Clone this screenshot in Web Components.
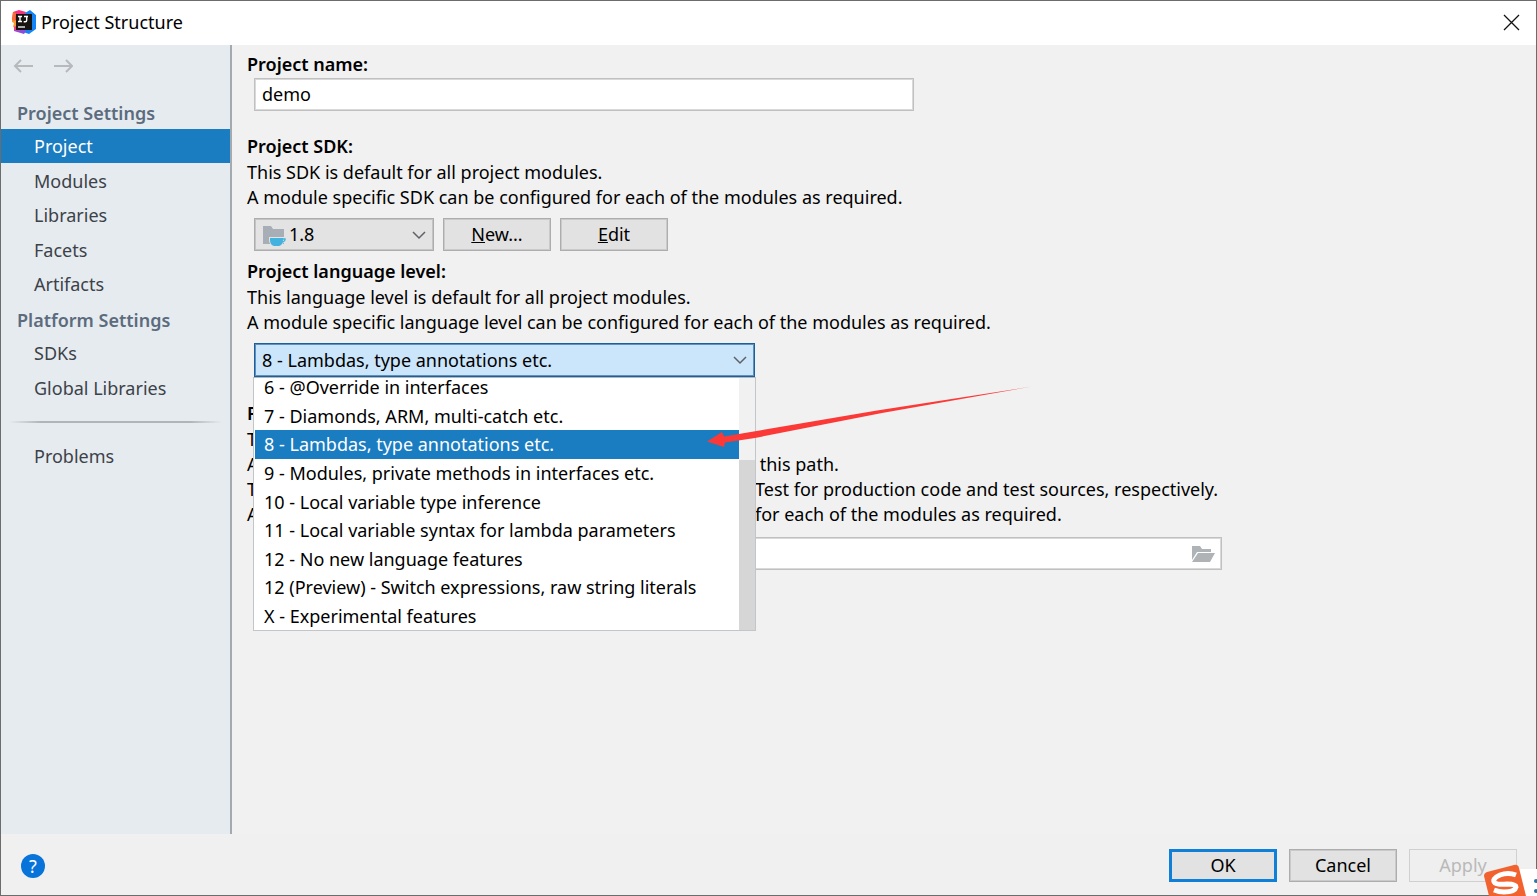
<!DOCTYPE html>
<html lang="en">
<head>
<meta charset="utf-8">
<title>Project Structure</title>
<style>
  html, body { height: 100%; margin: 0; }
  body { font: 18px/25px "Noto Sans", "Open Sans", sans-serif; color: #000; background: #f1f1f1; overflow: hidden; }
</style>
</head>
<body>
<settings-window>
  <side-nav slot="nav">
    <nav-group heading="Project Settings" size="large">
      <nav-item current>Project</nav-item>
      <nav-item>Modules</nav-item>
      <nav-item>Libraries</nav-item>
      <nav-item>Facets</nav-item>
      <nav-item>Artifacts</nav-item>
    </nav-group>
    <nav-group heading="Platform Settings" size="small">
      <nav-item>SDKs</nav-item>
      <nav-item>Global Libraries</nav-item>
    </nav-group>
    <nav-rule></nav-rule>
    <nav-group>
      <nav-item>Problems</nav-item>
    </nav-group>
  </side-nav>

  <project-form></project-form>

  <help-button slot="help"></help-button>
  <push-button slot="actions" primary>OK</push-button>
  <push-button slot="actions">Cancel</push-button>
  <push-button slot="actions" disabled>Apply</push-button>
  <ime-badge slot="overlay"></ime-badge>
</settings-window>

<script>
function define(name, html, setup) {
  const template = document.createElement('template');
  template.innerHTML = html;
  customElements.define(name, class extends HTMLElement {
    constructor() {
      super();
      this.attachShadow({ mode: 'open' }).append(template.content.cloneNode(true));
    }
    connectedCallback() { if (setup) setup(this, this.shadowRoot); }
  });
}

define('app-logo', `
  <style>:host { display: block; width: 24px; height: 24px; } svg { display: block; }</style>
  <svg width="24" height="24" viewBox="0 0 24 24" aria-hidden="true">
    <path d="M1 2 7 0l7 2-3 10-8 8-1-4 1-4-3-2z" fill="#f5317f"/>
    <path d="M0 9l6 2-2 7-3-1 1-4-2-1z" fill="#f89a2c"/>
    <path d="M1 2l3 1-1 8-3-1z" fill="#f2732c"/>
    <path d="M13 3l5-3 6 5v14l-7 5-9-3 8-6z" fill="#1683f4"/>
    <path d="M2 17l4-1 8 5-2 3-10-3z" fill="#8a4be0"/>
    <path d="M2 17l4-1 2 5-6-1z" fill="#f0417c"/>
    <rect x="4" y="4" width="16" height="16" fill="#161313"/>
    <path d="M6 6.500h4M8 6.500v5M6 11.500h4M12 6.500h4M14.700 6.500v3.800q0 1.500-1.500 1.500h-1.500" stroke="#fff" stroke-width="1.400" fill="none"/>
    <path d="M6 17h7" stroke="#fff" stroke-width="1.300"/>
  </svg>`);

define('settings-window', `
  <style>
    :host { display: flex; flex-direction: column; min-height: 100vh; box-sizing: border-box;
      border: 1px solid #6c6c6c; position: relative; background: #f1f1f1; }
    header { display: flex; align-items: center; gap: 5px; height: 44px; padding: 0 16px 2px 11px; background: #fff; box-sizing: border-box; }
    h1 { font: inherit; margin: 0; flex: 1; }
    .close { border: 0; background: none; padding: 0; width: 17px; height: 17px; display: block; }
    .close svg { display: block; }
    .body { flex: 1; display: flex; min-height: 0; }
    main { flex: 1; min-width: 0; }
    footer { display: flex; align-items: center; height: 61px; padding: 2px 19px 0 20px; gap: 12px; box-sizing: border-box; background: #f0f0f0; }
    .spacer { flex: 1; }
  </style>
  <header>
    <app-logo></app-logo>
    <h1>Project Structure</h1>
    <button class="close" aria-label="Close"><svg width="17" height="17"><path d="M1 1l15 15M16 1L1 16" stroke="#111" stroke-width="1.300"/></svg></button>
  </header>
  <div class="body">
    <slot name="nav"></slot>
    <main><slot></slot></main>
  </div>
  <footer>
    <slot name="help"></slot>
    <span class="spacer"></span>
    <slot name="actions"></slot>
  </footer>
  <slot name="overlay"></slot>`);

define('side-nav', `
  <style>
    :host { display: block; width: 229px; flex: none; background: #e6ebf0; border-right: 2px solid #a3aab0; }
    .history { display: flex; gap: 20px; height: 42px; padding-left: 12px; align-items: center; margin-bottom: 10px; }
    button { border: 0; background: none; padding: 0; width: 20px; height: 16px; }
    svg { display: block; }
    path { fill: none; stroke: #b7babd; stroke-width: 2; }
  </style>
  <div class="history">
    <button aria-label="Back" disabled><svg width="20" height="16"><path d="M20 8H2M8 2L2 8l6 6"/></svg></button>
    <button aria-label="Forward" disabled><svg width="20" height="16"><path d="M1 8h18M13 2l6 6-6 6"/></svg></button>
  </div>
  <nav aria-label="Settings"><slot></slot></nav>`);

define('nav-group', `
  <style>
    :host { display: block; }
    h2 { font-size: 18px; font-weight: 600; line-height: 32px; margin: 0; padding-left: 16px; color: #5c6b7e; white-space: nowrap; }
    h2:empty { display: none; }
    .list { display: flex; flex-direction: column; justify-content: space-between; }
    :host([size=large]) .list { height: 172px; margin-bottom: 3px; }
    :host([size=small]) .list { height: 69px; }
  </style>
  <h2></h2><div class="list" role="list"><slot></slot></div>`,
  (el, root) => { root.querySelector('h2').textContent = el.getAttribute('heading') || ''; });

define('nav-item', `
  <style>
    :host { display: block; }
    a { display: block; line-height: 34px; padding-left: 33px; color: #3c4248; text-decoration: none; }
    :host([current]) a { background: #1a7cc1; color: #fff; }
  </style>
  <a href="#"><slot></slot></a>`,
  (el, root) => {
    el.setAttribute('role', 'listitem');
    if (el.hasAttribute('current')) root.querySelector('a').setAttribute('aria-current', 'page');
  });

define('nav-rule', `
  <style>
    :host { display: block; height: 2px; margin: 16px 8px;
      background: linear-gradient(90deg, transparent, #b0b5b9 15%, #b0b5b9 85%, transparent); }
  </style>`);

define('push-button', `
  <style>
    :host { display: block; width: 108px; }
    button { font: inherit; width: 100%; height: 33px; padding: 0; box-sizing: border-box; display: block;
      background: #e2e2e2; border: 1px solid #adadad; color: #000; box-shadow: inset 0 0 0 1px #cacaca; line-height: 29px; }
    :host([primary]) button { border: 3px solid #0f7fd8; box-shadow: none; line-height: 25px; }
    button:disabled { background: #efefef; border-color: #d0d0d0; color: #b9b9b9; box-shadow: none; }
  </style>
  <button type="button"><slot></slot></button>`,
  (el, root) => { root.querySelector('button').disabled = el.hasAttribute('disabled'); });

define('help-button', `
  <style>
    button { font: inherit; width: 24px; height: 24px; padding: 0; border: 0; border-radius: 50%; display: block;
      background: #0873d8; color: #fff; line-height: 24px; }
  </style>
  <button type="button" aria-label="Help">?</button>`);

define('text-field', `
  <style>
    :host { display: block; }
    label { display: block; font-weight: 600; line-height: 26px; margin-bottom: 1px; }
    .box { display: flex; align-items: center; margin: var(--box-gap, 0) 0 0 7px; height: 33px; box-sizing: border-box;
      border: 1px solid #c0c0c0; outline: 1px solid #d9d9d9; outline-offset: -2px; background: #fff; padding: 0 6px 0 7px; }
    input { flex: 1; min-width: 0; border: 0; padding: 0; background: none; font: inherit; color: inherit; outline: 0; height: 25px; }
    ::slotted(p) { margin: 0; white-space: nowrap; }
  </style>
  <label for="field"></label>
  <slot></slot>
  <div class="box"><input id="field" type="text"><slot name="trailing"></slot></div>`,
  (el, root) => {
    root.querySelector('label').textContent = el.getAttribute('label');
    root.querySelector('input').value = el.getAttribute('value') || '';
  });

define('combo-field', `
  <style>
    :host { display: block; }
    label { display: block; font-weight: 600; line-height: 26px; margin-bottom: 1px; }
    ::slotted(p) { margin: 0; white-space: nowrap; }
    .row { display: flex; gap: 9px; margin: 8px 0 0 7px; }
    .combo { position: relative; width: var(--combo-width); }
    select { appearance: none; display: block; font: inherit; color: inherit; width: 100%; height: 33px; box-sizing: border-box;
      margin: 0; border: 1px solid #adadad; outline: 1px solid #c4c4c4; outline-offset: -2px; border-radius: 0; background: #e3e3e3; padding: 0 28px 0 var(--combo-inset, 7px); }
    :host([open]) select { background: #cbe5fa; border-color: #1d5f98; outline-color: #5d92bf; height: 34px; }
    .chevron { position: absolute; right: 8px; top: 13px; pointer-events: none; }
    .icon { position: absolute; left: 8px; top: 8px; pointer-events: none; }
    .popup { position: absolute; top: 100%; left: -1px; right: -1px; z-index: 2; }
  </style>
  <label for="field"></label>
  <slot></slot>
  <div class="row">
    <div class="combo">
      <select id="field"><option></option></select>
      <span class="icon"><slot name="icon"></slot></span>
      <svg class="chevron" width="14" height="9"><path d="M1 1l6 6 6-6" fill="none" stroke="#5e6266" stroke-width="1.500"/></svg>
      <div class="popup"><slot name="popup"></slot></div>
    </div>
    <slot name="buttons"></slot>
  </div>`,
  (el, root) => {
    root.querySelector('label').textContent = el.getAttribute('label');
    root.querySelector('option').textContent = el.getAttribute('value');
  });

define('option-list', `
  <style>
    :host { display: flex; height: 254px; box-sizing: border-box; border: 1px solid #c2c6c9; border-top-color: #b4b8bb; background: #fff; position: relative; }
    .items { flex: 1; min-width: 0; margin-left: 1px; overflow: hidden; display: flex; flex-direction: column; justify-content: flex-end; }
    .track { width: 16px; flex: none; background: #f1f1f1; display: flex; flex-direction: column; justify-content: flex-end; }
    .thumb { height: 170px; background: #d6d6d6; }
    .inner { height: 257px; flex: none; display: flex; flex-direction: column; }
  </style>
  <div class="items"><div class="inner" role="listbox" aria-label="Project language level"><slot></slot></div></div>
  <div class="track"><div class="thumb"></div></div>`);

define('list-option', `
  <style>
    :host { display: flex; align-items: center; flex: 1; padding-left: 9px; white-space: nowrap; line-height: 28px; }
    :host([selected]) { background: #1a7cc1; color: #fff; }
  </style><slot></slot>`,
  el => { el.setAttribute('role', 'option'); el.setAttribute('aria-selected', el.hasAttribute('selected')); });

define('pointer-arrow', `
  <style>:host { display: block; position: absolute; left: 454px; top: 8px; pointer-events: none; } svg { display: block; }</style>
  <svg width="326" height="64" viewBox="0 0 326 64" aria-hidden="true">
    <path d="M325 1.500 170 25.500 17 51.500 15 47 0 56.500 17 62 18 57.500 48 53 175 28z" fill="#fb3a37"/>
  </svg>`);

define('sdk-icon', `
  <style>:host, svg { display: block; }</style>
  <svg width="25" height="22" viewBox="0 0 25 22" aria-hidden="true">
    <path d="M1 0h8l2 3h11v15H1z" fill="#a7aeb5"/>
    <path d="M7 11h15.500v1q2 0 2 2t-3.500 3q-1 3-4 3h-5q-5-1-5-6z" fill="#e3e3e3"/>
    <path d="M8 12h13v2q0 5-4 6h-5q-4-1-4-6z" fill="#42b2df"/>
    <path d="M21 13h2v1q-1 2-3 2" fill="none" stroke="#42b2df" stroke-width="1.400"/>
  </svg>`);

define('folder-button', `
  <style>:host { display: block; } button { border: 0; padding: 0; background: none; display: block; } svg { display: block; }</style>
  <button type="button" aria-label="Browse"><svg width="24" height="18" viewBox="0 0 24 18">
    <path d="M1 1h8l2 3h9v3H6L1 15z" fill="#aeb3b7"/><path d="M7 8h17l-5 9H1z" fill="#afb3b6"/>
  </svg></button>`);

define('project-form', `
  <style>
    :host { display: flex; flex-direction: column; padding: 6px 16px 0 15px; }
    .name { max-width: 667px; margin-bottom: 22px; }
    .sdk { --combo-width: 180px; --combo-inset: 34px; margin-bottom: 7px; }
    .level { --combo-width: 501px; margin-bottom: 23px; }
    .output { --box-gap: 10px; max-width: 975px; }
    .lead { display: inline-block; width: 508px; }
  </style>
  <text-field class="name" label="Project name:" value="demo"></text-field>
  <combo-field class="sdk" label="Project SDK:" value="1.8">
    <p>This SDK is default for all project modules.</p>
    <p>A module specific SDK can be configured for each of the modules as required.</p>
    <sdk-icon slot="icon"></sdk-icon>
    <push-button slot="buttons"><u>N</u>ew...</push-button>
    <push-button slot="buttons"><u>E</u>dit</push-button>
  </combo-field>
  <combo-field class="level" open label="Project language level:" value="8 - Lambdas, type annotations etc.">
    <p>This language level is default for all project modules.</p>
    <p>A module specific language level can be configured for each of the modules as required.</p>
    <option-list slot="popup">
      <list-option>6 - @Override in interfaces</list-option>
      <list-option>7 - Diamonds, ARM, multi-catch etc.</list-option>
      <list-option selected>8 - Lambdas, type annotations etc.</list-option>
      <list-option>9 - Modules, private methods in interfaces etc.</list-option>
      <list-option>10 - Local variable type inference</list-option>
      <list-option>11 - Local variable syntax for lambda parameters</list-option>
      <list-option>12 - No new language features</list-option>
      <list-option>12 (Preview) - Switch expressions, raw string literals</list-option>
      <list-option>X - Experimental features</list-option>
    </option-list>
    <pointer-arrow slot="popup"></pointer-arrow>
  </combo-field>
  <text-field class="output" label="Project compiler output:">
    <p>This path is used to store all project compilation results.</p>
    <p><span class="lead">A directory corresponding to each module is created under</span> this path.</p>
    <p><span class="lead">This directory contains two subdirectories: Production and </span>Test for production code and test sources, respectively.</p>
    <p><span class="lead">A module specific compiler output path can be configured </span>for each of the modules as required.</p>
    <folder-button slot="trailing"></folder-button>
  </text-field>`);

define('ime-badge', `
  <style>:host { display: block; position: absolute; right: -1px; bottom: -1px; z-index: 3; } svg { display: block; }</style>
  <svg width="54" height="32" viewBox="0 0 54 32" aria-hidden="true">
    <path d="M36 5h18v27H36z" fill="#fff"/>
    <path d="M4 8 31 1q4-1 5 3l7 28H6L1 12q0-3 3-4z" fill="#f1622f"/>
    <path d="M33 11q-8-3-16 0-9 4-5 8 3 2 12 1 9 0 9 3-1 5-12 5-5 0-10-2" fill="none" stroke="#fff" stroke-width="5"/>
    <circle cx="53" cy="17" r="2" fill="#2579a9"/><circle cx="53" cy="27" r="2" fill="#2579a9"/>
  </svg>`);
</script>
</body>
</html>
